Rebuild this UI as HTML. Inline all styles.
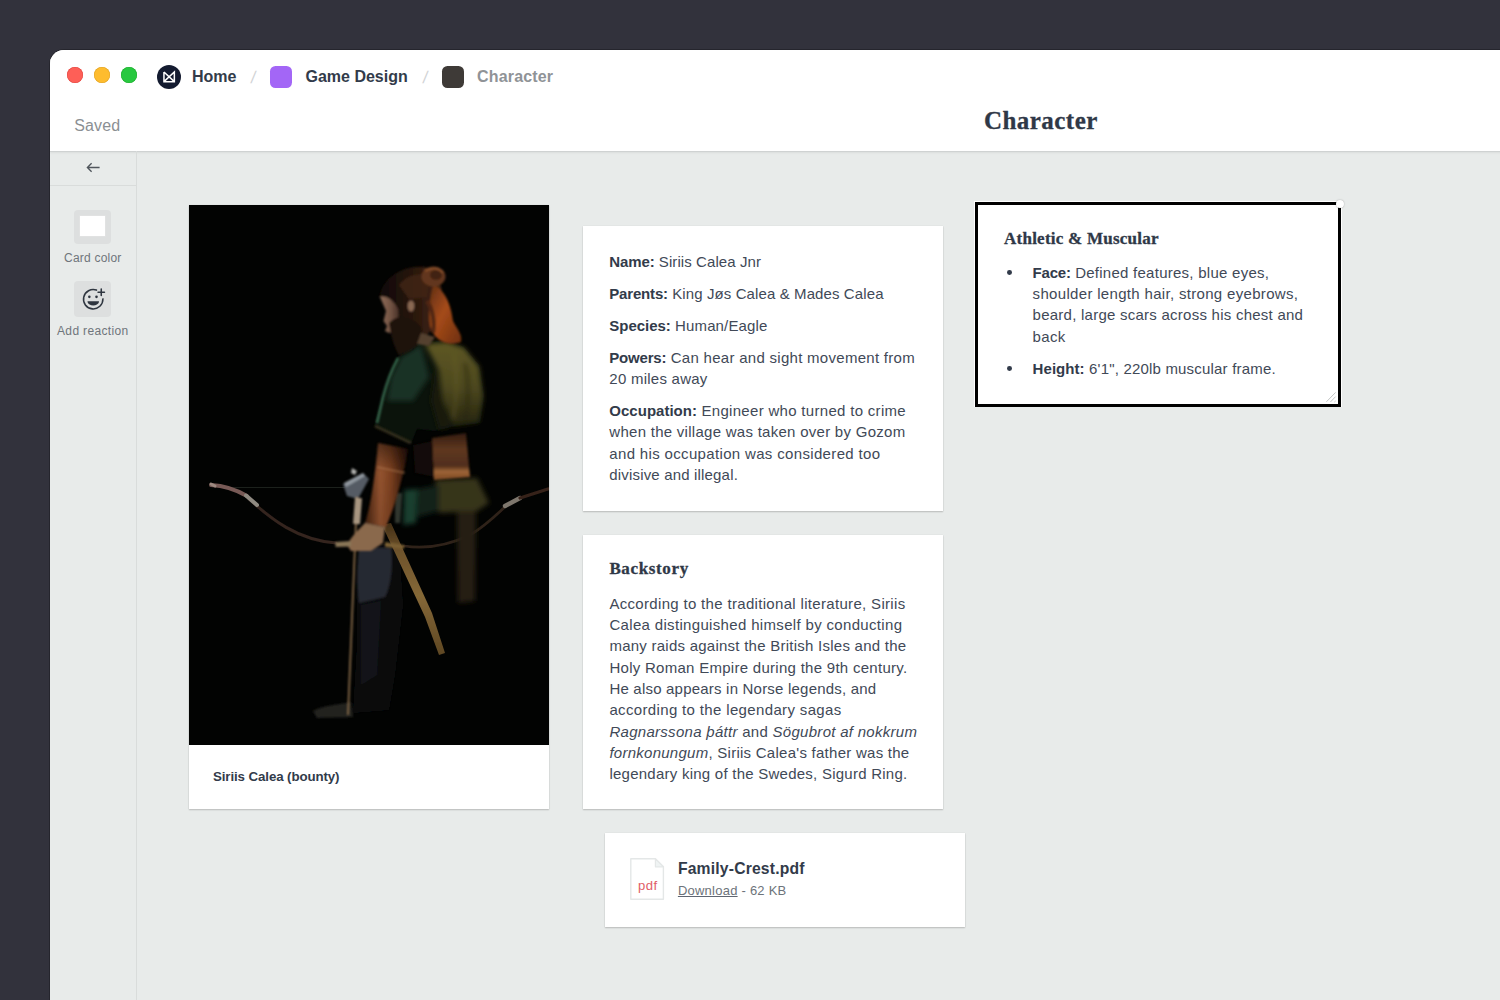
<!DOCTYPE html>
<html>
<head>
<meta charset="utf-8">
<title>Character</title>
<style>
*{box-sizing:border-box;margin:0;padding:0}
html,body{width:1500px;height:1000px;overflow:hidden;background:#32323c;font-family:"Liberation Sans",sans-serif;color:#323b4a}
.win{position:absolute;left:50px;top:50px;width:1460px;height:960px;background:#e8ebea;border-top-left-radius:14px;overflow:hidden;box-shadow:0 0 0 1px rgba(0,0,0,.25)}
.hdr{position:absolute;left:0;top:0;width:100%;height:101px;background:#fff;box-shadow:0 1px 0 #cfd2d2,0 2px 2px rgba(0,0,0,.06)}
.abs{position:absolute;white-space:nowrap}
.tl{position:absolute;top:17px;width:16px;height:16px;border-radius:50%}
.bc{position:absolute;top:17px;font-weight:bold;font-size:16px;line-height:20px;white-space:nowrap;color:#323b4a}
.sq{position:absolute;top:16px;width:21.5px;height:21.5px;border-radius:5.5px}
.slash{position:absolute;top:18px;font-size:17px;line-height:20px;color:#d2d4d6;transform:skewX(-8deg)}
.side{position:absolute;left:0;top:101px;width:86.5px;height:900px;border-right:1px solid #d9dcdb}
.side .sep{position:absolute;left:0;top:34px;width:86px;height:1px;background:#d9dcdb}
.tool{position:absolute;border-radius:4px;background:#dddfdf}
.tlabel{position:absolute;left:0;width:86px;text-align:center;font-size:12.3px;line-height:14px;color:#6f757b;white-space:nowrap}
.card{position:absolute;background:#fff;box-shadow:0 1px 1.5px rgba(0,0,0,.2),0 0 1px rgba(0,0,0,.1)}
.ln{position:absolute;white-space:nowrap;font-size:15px;line-height:21px;color:#414957}
.ln b{color:#323b4a}
.ln u{text-decoration-color:#5f6672;text-underline-offset:1.4px;text-decoration-thickness:1.3px}
.serif{font-family:"Liberation Serif",serif;font-weight:bold;color:#2f3847;-webkit-text-stroke:.3px #2f3847}
</style>
</head>
<body>
<div class="win">
  <div class="hdr">
    <div class="tl" style="left:17.4px;background:#fe5f57;box-shadow:inset 0 0 0 .5px #e0443e"></div>
    <div class="tl" style="left:44px;background:#febc2e;box-shadow:inset 0 0 0 .5px #dea123"></div>
    <div class="tl" style="left:71px;background:#28c840;box-shadow:inset 0 0 0 .5px #1aab29"></div>
    <svg class="abs" style="left:106.8px;top:14.6px" width="24" height="24" viewBox="0 0 24 24"><circle cx="12" cy="12" r="12" fill="#141b30"/><path d="M6.95 7V16.65H17.35V7L6.95 16.65M6.95 7L17.35 16.65" fill="none" stroke="#fff" stroke-width="1.5" stroke-linejoin="miter" stroke-miterlimit="6"/></svg>
    <span class="bc" id="home" style="left:142px">Home</span>
    <span class="slash" style="left:201px">/</span>
    <div class="sq" style="left:220px;background:#a366f6"></div>
    <span class="bc" id="gd" style="left:255.5px">Game Design</span>
    <span class="slash" style="left:373px">/</span>
    <div class="sq" style="left:392px;background:#3e3a37"></div>
    <span class="bc" id="chr" style="left:427px;color:#8f9397;letter-spacing:.17px">Character</span>
    <span class="abs" id="saved" style="left:24.3px;top:66.400px;letter-spacing:.1px;font-size:16px;line-height:20px;color:#8b8f93">Saved</span>
    <span class="abs serif" id="title" style="left:934px;top:55.5px;font-size:25px;line-height:30px;letter-spacing:.45px">Character</span>
  </div>
  <div class="side">
    <svg class="abs" style="left:36px;top:11px" width="15" height="11" viewBox="0 0 15 11"><path d="M13.6 5.5H1.6M5.6 1.3L1.4 5.5l4.2 4.2" fill="none" stroke="#50565c" stroke-width="1.35"/></svg>
    <div class="sep"></div>
    <div class="tool" style="left:24.1px;top:59.2px;width:37px;height:33.5px"><div style="position:absolute;left:6.3px;top:6px;width:24.5px;height:20.3px;background:#fff;box-shadow:0 0 0 .6px #e3e5e5"></div></div>
    <div class="tool" style="left:24.1px;top:130px;width:37px;height:36px"><svg width="36" height="36" viewBox="0 0 36 36" style="position:absolute;left:.6px;top:0"><g fill="none" stroke="#2f3640" stroke-width="1.55" stroke-linecap="round"><path d="M21.5 9.1A9.7 9.7 0 1 0 27.9 17.9"/><path d="M26.25 8V14.4M23.05 11.2H29.45"/></g><circle cx="14.35" cy="15.85" r="1.3" fill="#2f3640"/><circle cx="21.5" cy="15.85" r="1.3" fill="#2f3640"/><path d="M12.9 20.2H23.6C24 20.2 24.1 20.5 24 20.9C23.4 23 21 24.4 18.25 24.4C15.500 24.4 13.100 23 12.500 20.9C12.4 20.5 12.500 20.2 12.9 20.2Z" fill="#2f3640"/></svg></div>
  </div>

  <!-- photo card -->
  <div class="card" style="left:139px;top:155px;width:360.300px;height:604.400px">
    <div id="photo" style="position:absolute;left:0;top:0;width:360px;height:540px;background:#020302;overflow:hidden"><svg width="360" height="540" viewBox="0 0 360 540" style="position:absolute;left:0;top:0;display:block">
<defs>
<filter id="b05" x="-20%" y="-20%" width="140%" height="140%"><feGaussianBlur stdDeviation=".6"/></filter>
<filter id="b1" x="-20%" y="-20%" width="140%" height="140%"><feGaussianBlur stdDeviation="1.1"/></filter>
<filter id="b2" x="-30%" y="-30%" width="160%" height="160%"><feGaussianBlur stdDeviation="2.4"/></filter>
<filter id="b4" x="-40%" y="-40%" width="180%" height="180%"><feGaussianBlur stdDeviation="4.500"/></filter>
<linearGradient id="back" x1="0" y1="0" x2="0" y2="1"><stop offset="0" stop-color="#6a6228"/><stop offset=".55" stop-color="#555022"/><stop offset="1" stop-color="#2a280f"/></linearGradient>
<linearGradient id="arm" x1="0" y1="0" x2="1" y2="0"><stop offset="0" stop-color="#4a2410"/><stop offset=".35" stop-color="#a65e36"/><stop offset=".6" stop-color="#8a4824"/><stop offset="1" stop-color="#2a1208"/></linearGradient>
<linearGradient id="armv" x1="0" y1="0" x2="0" y2="1"><stop offset="0" stop-color="#000" stop-opacity=".45"/><stop offset=".35" stop-color="#000" stop-opacity="0"/><stop offset="1" stop-color="#000" stop-opacity=".1"/></linearGradient>
<linearGradient id="belt" x1="0" y1="0" x2="0" y2="1"><stop offset="0" stop-color="#3a2012"/><stop offset=".35" stop-color="#6a3e24"/><stop offset=".7" stop-color="#5a3420"/><stop offset=".82" stop-color="#b0703e"/><stop offset="1" stop-color="#8a5028"/></linearGradient>
<linearGradient id="hairo" x1="0" y1="0" x2="1" y2="1"><stop offset="0" stop-color="#6a3418"/><stop offset=".45" stop-color="#b8541c"/><stop offset="1" stop-color="#7a3410"/></linearGradient>
<linearGradient id="scab" x1="0" y1="0" x2="0" y2="1"><stop offset="0" stop-color="#4a3418"/><stop offset=".2" stop-color="#7a5c30"/><stop offset=".55" stop-color="#94743e"/><stop offset="1" stop-color="#6a5028"/></linearGradient>
<linearGradient id="hairb" x1="0" y1="0" x2="1" y2="0"><stop offset="0" stop-color="#120a06"/><stop offset=".5" stop-color="#2a180e"/><stop offset="1" stop-color="#4e2c18"/></linearGradient>
<linearGradient id="face" x1="0" y1="0" x2="1" y2="0"><stop offset="0" stop-color="#a07a64"/><stop offset=".55" stop-color="#7e5c4a"/><stop offset="1" stop-color="#4a3228"/></linearGradient>
</defs>
<rect width="360" height="540" fill="#030403"/>
<!-- bow -->
<g fill="none" stroke-linecap="round" filter="url(#b05)">
<path d="M30,282.500H156" stroke="#262826" stroke-width=".9"/>
<path d="M60,294C82,314 108,335 147,338" stroke="#3a2922" stroke-width="3"/>
<path d="M22,280C32,280.500 46,284 58,291" stroke="#866560" stroke-width="3.800"/>
<path d="M22,279L26,281" stroke="#b09a90" stroke-width="3"/>
<path d="M57,290.500L68,300" stroke="#a09a90" stroke-width="4"/>
<path d="M215,341C235,344 258,341 281,330C298,320 309,308 318,300" stroke="#35261c" stroke-width="2.700"/>
<path d="M316,301L331,293" stroke="#8d857a" stroke-width="4.400"/>
<path d="M331,293L359,284" stroke="#3e261d" stroke-width="3.200"/>
</g>
<!-- legs -->
<g filter="url(#b1)">
<path d="M170,340L210,338L214,400L206,470L200,505L164,508L168,440L168,400Z" fill="#0c0e10"/>
<path d="M170,343L202,343C204,360 202,380 196,392L170,398C167,380 168,360 170,343Z" fill="#2b2e37"/>
<path d="M172,400L192,396L188,470L172,480Z" fill="#14171b"/>
<path d="M124,506C134,500 150,500 162,497L164,512L128,513Z" fill="#262624"/>
</g>
<!-- skirt / drapes -->
<g filter="url(#b2)">
<path d="M246,275L288,273L300,298L288,306L250,308Z" fill="#3c3a1c"/>
<path d="M268,306L287,306L286,396L269,398Z" fill="#2a2412"/>
<path d="M215,285L228,284L227,318L214,320Z" fill="#1c4636"/>
<path d="M228,284L250,280L250,306L228,312Z" fill="#15261c"/>
</g>
<path d="M206,288L213,288L211,318L206,318Z" fill="#5a6456" opacity=".6" filter="url(#b1)"/>
<!-- scabbard -->
<path d="M193,320L202,318L243,408L256,448L250,450L236,412Z" fill="url(#scab)" filter="url(#b05)"/>
<!-- torso -->
<path d="M231,137L208,152L193.500,191L185,221L222,239L228,224L246,226L262,222L291,218L295,190L290,160L275,142L258,136Z" fill="#0a120c" filter="url(#b1)"/>
<g filter="url(#b2)">
<path d="M212,152L232,140L240,172L224,196L198,196L202,172Z" fill="#1a3829"/>
<path d="M236,139L258,137L275,143L290,162L294,192L290,217L264,221L254,196L250,165Z" fill="url(#back)"/>
<path d="M247,160L253,196L262,222L250,225L242,196Z" fill="#1a1c0c"/>
<path d="M276,158C280,175 280,198 276,216" stroke="#2c2a10" stroke-width="2.500" fill="none"/>
<path d="M265,150C268,170 268,195 264,214" stroke="#7a7030" stroke-width="2" fill="none" opacity=".6"/>
</g>
<path d="M209,153C202,166 197,180 194,192L188,218" stroke="#3a7052" stroke-width="2.600" fill="none" filter="url(#b1)"/>
<path d="M186,221L222,238" stroke="#3a3424" stroke-width="3" fill="none" filter="url(#b1)"/>
<!-- belt -->
<g filter="url(#b1)">
<path d="M243,233L277,228L281,272L245,275Z" fill="url(#belt)"/>
<path d="M224,240L243,236L245,272L226,268Z" fill="#120c08"/>
<!-- forearm -->
<path d="M189,238L219,244C217,258 214,270 210,284C206,300 201,312 197,322L176,318C182,300 186,270 189,238Z" fill="url(#arm)"/><path d="M189,238L219,244C217,258 214,270 210,284C206,300 201,312 197,322L176,318C182,300 186,270 189,238Z" fill="url(#armv)"/>
<path d="M188,262L216,268" stroke="#d09060" stroke-width="1" fill="none" opacity=".7"/>
<!-- axe -->
<path d="M154,279L174,268L180,274L169,294L158,291Z" fill="#5e6670"/>
<path d="M155,278L174,268L176,271L157,282Z" fill="#a0a8b0"/><path d="M163,263L168,266L166,270L162,268Z" fill="#c8c8c4"/>
<!-- arrow -->
<path d="M168,292L159,510" stroke="#a07e56" stroke-width="1.700" fill="none"/>
<path d="M169.500,293L167.500,319" stroke="#bca890" stroke-width="7" fill="none"/>
<!-- hand -->
<path d="M176,318L196,322L194,338L182,346L162,346L158,340C162,332 168,326 176,318Z" fill="#9a7454"/>
<path d="M146.500,337L162,336L162,341.500L146.500,342Z" fill="#9a8462"/>
<path d="M196,337L215,340L215,344L196,342Z" fill="#8a6c3a"/>
</g>
<!-- head -->
<g filter="url(#b1)">
<path d="M190,92C194,72 214,60 236,62C250,66 256,84 252,104C248,120 240,130 232,134L214,120L204,96Z" fill="url(#hairb)"/>
<path d="M210,80C218,70 230,67 240,72L238,92L220,94Z" fill="#4a2a18" opacity=".8"/>
<path d="M191,92C196,90 204,94 209,104L211,124L200,128L196,126L198,121L194.500,116L197,106Z" fill="url(#face)"/>

<path d="M200,118C208,108 224,112 232,122C236,134 226,146 210,150C204,140 202,130 200,118Z" fill="#23150e"/>
<ellipse cx="222" cy="101" rx="3.300" ry="5.500" fill="#9a745c"/>
<path d="M232,128L246,132L240,141L228,139Z" fill="#5e4836"/>
<path d="M244,80C256,84 262,100 264,116C268,124 274,130 272,137C262,141 250,138 244,128C238,118 240,98 244,80Z" fill="url(#hairo)"/>
<path d="M238,96C244,104 246,118 244,128" stroke="#5a2c14" stroke-width="4" fill="none"/>
<ellipse cx="244.500" cy="71.500" rx="12" ry="10" fill="#6e3c20"/>
<ellipse cx="247" cy="70" rx="6" ry="5" fill="#4a2614"/>
<path d="M236,66C242,62 250,62 254,68" stroke="#9a5a30" stroke-width="2" fill="none"/>
</g>
<rect width="360" height="540" fill="#000" opacity=".1"/>
</svg>
</div>
  </div>

  <!-- info card -->
  <div class="card" style="left:533.3px;top:175.800px;width:360px;height:285px"></div>
  <!-- backstory -->
  <div class="card" style="left:533.3px;top:485.200px;width:360px;height:274.200px"></div>
  <!-- file -->
  <div class="card" style="left:554.700px;top:783px;width:360px;height:93.600px">
    <svg style="position:absolute;left:24.4px;top:24.2px" width="36" height="44" viewBox="0 0 36 44"><path d="M1.8 1.800H26.400L34.400 9.800V42.300H1.800Z" fill="#fff" stroke="#e4e7e7" stroke-width="1.4" stroke-linejoin="round"/><path d="M26.400 1.800V9.800H34.400Z" fill="#eff3f3" stroke="#e4e7e7" stroke-width="1.2" stroke-linejoin="round"/></svg>
  </div>
  <!-- selected -->
  <div style="position:absolute;left:924.4px;top:151.200px;width:367.400px;height:206.300px;background:#fff"></div>
  <div style="position:absolute;left:925.2px;top:152px;width:365.800px;height:204.700px;background:#000"></div>
  <div style="position:absolute;left:927.9px;top:154.700px;width:360.400px;height:199.300px;background:#fff"></div>
  <div style="position:absolute;left:1286px;top:149.800px;width:8px;height:8px;border-radius:50%;background:#fff;box-shadow:0 0 1.500px rgba(0,0,0,.35)"></div>
  <svg style="position:absolute;left:1275px;top:341px" width="12" height="12" viewBox="0 0 12 12"><path d="M1.4 10.800L10.600 1.400M5.400 11L10.600 5.600M9.400 11L10.600 10" stroke="#c4c6c6" stroke-width="1" fill="none"/></svg>
  <div style="position:absolute;left:956.8px;top:219.800px;width:4.800px;height:4.800px;border-radius:50%;background:#323b4a"></div>
  <div style="position:absolute;left:956.8px;top:315.800px;width:4.800px;height:4.800px;border-radius:50%;background:#323b4a"></div>
<span class="ln" id="i1" style="left:559.3px;top:200.7px;font-size:15px;letter-spacing:0.081px;"><b style="letter-spacing:-0.112px">Name:</b> Siriis Calea Jnr</span>
<span class="ln" id="i2" style="left:559.3px;top:232.7px;font-size:15px;letter-spacing:0.107px;"><b style="letter-spacing:-0.179px">Parents:</b> King Jøs Calea &amp; Mades Calea</span>
<span class="ln" id="i3" style="left:559.3px;top:264.7px;font-size:15px;letter-spacing:0.128px;"><b style="letter-spacing:-0.025px">Species:</b> Human/Eagle</span>
<span class="ln" id="i4" style="left:559.3px;top:296.7px;font-size:15px;letter-spacing:0.285px;"><b style="letter-spacing:-0.194px">Powers:</b> Can hear and sight movement from</span>
<span class="ln" id="i5" style="left:559.3px;top:318.0px;font-size:15px;letter-spacing:0.250px;">20 miles away</span>
<span class="ln" id="i6" style="left:559.3px;top:350.0px;font-size:15px;letter-spacing:0.306px;"><b style="letter-spacing:0.017px">Occupation:</b> Engineer who turned to crime</span>
<span class="ln" id="i7" style="left:559.3px;top:371.4px;font-size:15px;letter-spacing:0.274px;">when the village was taken over by Gozom</span>
<span class="ln" id="i8" style="left:559.3px;top:392.7px;font-size:15px;letter-spacing:0.340px;">and his occupation was considered too</span>
<span class="ln" id="i9" style="left:559.3px;top:414.0px;font-size:15px;letter-spacing:0.172px;">divisive and illegal.</span>
<span class="ln" id="b1" style="left:559.4px;top:542.5px;font-size:15px;letter-spacing:0.322px;">According to the traditional literature, Siriis</span>
<span class="ln" id="b2" style="left:559.4px;top:563.8px;font-size:15px;letter-spacing:0.333px;">Calea distinguished himself by conducting</span>
<span class="ln" id="b3" style="left:559.4px;top:585.2px;font-size:15px;letter-spacing:0.250px;">many raids against the British Isles and the</span>
<span class="ln" id="b4" style="left:559.4px;top:606.5px;font-size:15px;letter-spacing:0.280px;">Holy Roman Empire during the 9th century.</span>
<span class="ln" id="b5" style="left:559.4px;top:627.8px;font-size:15px;letter-spacing:0.207px;">He also appears in Norse legends, and</span>
<span class="ln" id="b6" style="left:559.4px;top:649.2px;font-size:15px;letter-spacing:0.350px;">according to the legendary sagas</span>
<span class="ln" id="b7" style="left:559.4px;top:670.5px;font-size:15px;letter-spacing:0.289px;"><i>Ragnarssona þáttr</i> and <i>Sögubrot af nokkrum</i></span>
<span class="ln" id="b8" style="left:559.4px;top:691.8px;font-size:15px;letter-spacing:0.261px;"><i>fornkonungum</i>, Siriis Calea's father was the</span>
<span class="ln" id="b9" style="left:559.4px;top:713.2px;font-size:15px;letter-spacing:0.246px;">legendary king of the Swedes, Sigurd Ring.</span>
<span class="ln" id="s1" style="left:982.6px;top:211.6px;font-size:15px;letter-spacing:0.260px;"><b style="letter-spacing:-0.217px">Face:</b> Defined features, blue eyes,</span>
<span class="ln" id="s2" style="left:982.6px;top:233.0px;font-size:15px;letter-spacing:0.321px;">shoulder length hair, strong eyebrows,</span>
<span class="ln" id="s3" style="left:982.6px;top:254.3px;font-size:15px;letter-spacing:0.247px;">beard, large scars across his chest and</span>
<span class="ln" id="s4" style="left:982.6px;top:275.6px;font-size:15px;letter-spacing:0.328px;">back</span>
<span class="ln" id="s5" style="left:982.6px;top:307.6px;font-size:15px;letter-spacing:0.190px;"><b style="letter-spacing:0.061px">Height:</b> 6'1", 220lb muscular frame.</span>
<span class="ln" id="cap" style="left:163.0px;top:715.5px;font-size:13.3px;letter-spacing:-0.103px;font-weight:bold;color:#323b4a">Siriis Calea (bounty)</span>
<span class="ln" id="f1" style="left:627.9px;top:807.6px;font-size:15.7px;letter-spacing:0.189px;font-weight:bold;color:#323b4a">Family-Crest.pdf</span>
<span class="ln" id="f2" style="left:627.9px;top:829.6px;font-size:13px;letter-spacing:0.238px;color:#6d737a"><u>Download</u> - 62 KB</span>
<span class="ln" id="f3" style="left:588.0px;top:824.6px;font-size:13.1px;letter-spacing:0.432px;color:#e15d68">pdf</span>
<span class="ln" id="cc" style="left:14.0px;top:197.5px;font-size:12px;letter-spacing:0.214px;color:#6f757b">Card color</span>
<span class="ln" id="ar" style="left:7.0px;top:270.8px;font-size:12px;letter-spacing:0.351px;color:#6f757b">Add reaction</span>
<span class="ln serif" id="t1" style="left:559.4px;top:508.3px;font-size:17px;line-height:22px;letter-spacing:0.636px;">Backstory</span>
<span class="ln serif" id="t2" style="left:954.0px;top:177.8px;font-size:17px;line-height:22px;letter-spacing:0.245px;">Athletic &amp; Muscular</span>
</div>
</body>
</html>
